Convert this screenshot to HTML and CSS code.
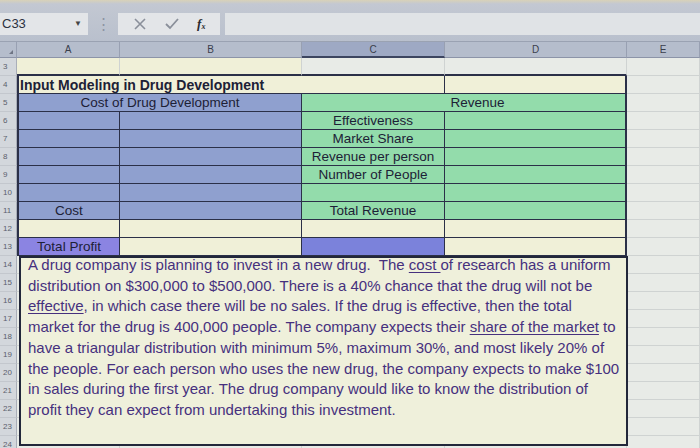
FILE: index.html
```html
<!DOCTYPE html>
<html>
<head>
<meta charset="utf-8">
<link rel="stylesheet" href="styles.css">
</head>
<body>
<div class="app">
  <div class="toolbar">
    <div class="namebox"><span>C33</span><span class="arrow">&#9660;</span></div>
    <div class="dots">&#8942;</div>
    <div class="btns">
      <svg class="ico" width="14" height="14" viewBox="0 0 14 14"><path d="M2 2 L12 12 M12 2 L2 12" stroke="#8a8f9a" stroke-width="1.6" fill="none"/></svg>
      <svg class="ico" width="16" height="14" viewBox="0 0 16 14"><path d="M2 7 L6 11 L14 2" stroke="#8a8f9a" stroke-width="1.8" fill="none"/></svg>
      <span class="fx">f<sub>x</sub></span>
    </div>
    <div class="formula"></div>
  </div>

  <div class="sheet">
    <div class="corner"><span class="tri"></span></div>
    <div class="ch">A</div><div class="ch">B</div><div class="ch sel">C</div><div class="ch">D</div><div class="ch">E</div>

    <div class="rh">3</div>
    <div class="c cream top"></div><div class="c cream top"></div><div class="c top"></div><div class="c top"></div><div class="c"></div>

    <div class="rh">4</div>
    <div class="c cream t la span3 title">Input Modeling in Drug Development</div><div class="c cream t rd"></div><div class="c"></div>

    <div class="rh">5</div>
    <div class="c blue t la span2 center">Cost of Drug Development</div><div class="c green t span2 center rd rev">Revenue</div><div class="c"></div>

    <div class="rh">6</div>
    <div class="c blue t la"></div><div class="c blue t"></div><div class="c green t center">Effectiveness</div><div class="c green t rd"></div><div class="c"></div>

    <div class="rh">7</div>
    <div class="c blue t la"></div><div class="c blue t"></div><div class="c green t center">Market Share</div><div class="c green t rd"></div><div class="c"></div>

    <div class="rh">8</div>
    <div class="c blue t la"></div><div class="c blue t"></div><div class="c green t center">Revenue per person</div><div class="c green t rd"></div><div class="c"></div>

    <div class="rh">9</div>
    <div class="c blue t la"></div><div class="c blue t"></div><div class="c green t center">Number of People</div><div class="c green t rd"></div><div class="c"></div>

    <div class="rh">10</div>
    <div class="c blue t la"></div><div class="c blue t"></div><div class="c green t"></div><div class="c green t rd"></div><div class="c"></div>

    <div class="rh">11</div>
    <div class="c blue t la center">Cost</div><div class="c blue t"></div><div class="c green t center">Total Revenue</div><div class="c green t rd"></div><div class="c"></div>

    <div class="rh">12</div>
    <div class="c cream t la"></div><div class="c cream t"></div><div class="c cream t"></div><div class="c cream t rd"></div><div class="c"></div>

    <div class="rh">13</div>
    <div class="c purple t la center">Total Profit</div><div class="c cream t"></div><div class="c purple2 t"></div><div class="c cream t rd"></div><div class="c"></div>

    <div class="rh">14</div><div class="c"></div><div class="c"></div><div class="c"></div><div class="c"></div><div class="c"></div>
    <div class="rh">15</div><div class="c"></div><div class="c"></div><div class="c"></div><div class="c"></div><div class="c"></div>
    <div class="rh">16</div><div class="c"></div><div class="c"></div><div class="c"></div><div class="c"></div><div class="c"></div>
    <div class="rh">17</div><div class="c"></div><div class="c"></div><div class="c"></div><div class="c"></div><div class="c"></div>
    <div class="rh">18</div><div class="c"></div><div class="c"></div><div class="c"></div><div class="c"></div><div class="c"></div>
    <div class="rh">19</div><div class="c"></div><div class="c"></div><div class="c"></div><div class="c"></div><div class="c"></div>
    <div class="rh">20</div><div class="c"></div><div class="c"></div><div class="c"></div><div class="c"></div><div class="c"></div>
    <div class="rh">21</div><div class="c"></div><div class="c"></div><div class="c"></div><div class="c"></div><div class="c"></div>
    <div class="rh">22</div><div class="c"></div><div class="c"></div><div class="c"></div><div class="c"></div><div class="c"></div>
    <div class="rh">23</div><div class="c"></div><div class="c"></div><div class="c"></div><div class="c"></div><div class="c"></div>
    <div class="rh">24</div><div class="c"></div><div class="c"></div><div class="c"></div><div class="c"></div><div class="c"></div>

    <div class="textbox"><div class="tbtext">A drug company is planning to invest in a new drug.&nbsp; The <u>cost </u>of research has a uniform<br>distribution on $300,000 to $500,000. There is a 40% chance that the drug will not be<br><u>effective</u>, in which case there will be no sales. If the drug is effective, then the total<br>market for the drug is 400,000 people. The company expects their <u>share of the market</u> to<br>have a triangular distribution with minimum 5%, maximum 30%, and most likely 20% of<br>the people. For each person who uses the new drug, the company expects to make $100<br>in sales during the first year. The drug company would like to know the distribution of<br>profit they can expect from undertaking this investment.</div></div>
  </div>
</div>
</body>
</html>
```

FILE: styles.css
```css
* { box-sizing: border-box; }
html, body { margin: 0; padding: 0; }
body {
  width: 700px;
  height: 448px;
  overflow: hidden;
  font-family: "Liberation Sans", Arial, sans-serif;
  background: #e8ebe7;
}
.app { width: 700px; height: 448px; position: relative; overflow: hidden; }

.toolbar {
  height: 42px;
  display: flex;
  align-items: center;
  padding-top: 6px;
  background: linear-gradient(180deg, #d8d2b8 0, #c3c8d2 4px, #b9c0cd 100%);
  border-bottom: 1px solid #9aa2b2;
}
.namebox {
  width: 88px;
  height: 22px;
  background: #e3e5e8;
  display: flex;
  align-items: center;
  justify-content: space-between;
  padding: 0 4px 0 2px;
  font-size: 13px;
  color: #2c3140;
}
.namebox .arrow { font-size: 8px; color: #444; margin-right: 2px; }
.dots {
  width: 30px;
  text-align: center;
  color: #8c93a2;
  font-size: 15px;
}
.btns {
  width: 102px;
  height: 22px;
  background: #e3e5e8;
  display: flex;
  align-items: center;
  justify-content: space-around;
  padding: 0 6px;
}
.fx {
  font-family: "Liberation Serif", serif;
  font-style: italic;
  font-weight: bold;
  font-size: 13px;
  color: #2a2a30;
}
.fx sub { font-size: 8px; vertical-align: -1px; }
.formula {
  flex: 1;
  height: 22px;
  margin-left: 5px;
  background: #e0e3e6;
}

.sheet {
  position: relative;
  display: grid;
  grid-template-columns: 17px 103px 182px 143px 182px 73px;
  grid-template-rows: 16px;
  grid-auto-rows: 18px;
}
.corner, .ch {
  background: #b5bdcc;
  border-right: 1px solid #98a0b2;
  border-bottom: 1px solid #8c94a8;
  font-size: 10px;
  color: #3a3f4c;
  display: flex;
  align-items: center;
  justify-content: center;
}
.ch.sel { background: #9ea9c4; border-bottom: 2px solid #3c4560; }
.corner { position: relative; }
.tri {
  position: absolute;
  right: 3px;
  bottom: 3px;
  width: 0; height: 0;
  border-left: 4px solid transparent;
  border-bottom: 4px solid #6e7584;
}
.rh {
  background: #d3d7dc;
  border-right: 1px solid #a9aeb8;
  border-bottom: 1px solid #c3c7cd;
  font-size: 8px;
  color: #5b606c;
  display: flex;
  align-items: center;
  padding-left: 3px;
}
.c {
  border-right: 1px solid #cfd3d2;
  border-bottom: 1px solid #cfd3d2;
  font-size: 13.5px;
  color: #1d2136;
  display: flex;
  align-items: center;
  white-space: nowrap;
  overflow: visible;
}
.cream { background: #f0f0d8; }
.blue { background: #8fa0cf; }
.green { background: #93dcab; }
.purple { background: #8b84e2; }
.purple2 { background: #7b82db; }
.t { border-right: 1px solid #2b3048; border-bottom: 1px solid #2b3048; }
.la { border-left: 2px solid #2b3048; }
.rd { border-right: 2px solid #2b3048; }
.top { border-bottom: 2px solid #2b3048; }
.span2 { grid-column: span 2; }
.span3 { grid-column: span 3; }
.center { justify-content: center; }
.title { font-weight: bold; padding-left: 1px; font-size: 14px; }
.rev { padding-left: 28px; }

.textbox {
  position: absolute;
  left: 19px;
  top: 214px;
  width: 609px;
  height: 190px;
  background: #eff0db;
  border: 2px solid #22273a;
  padding: 0 0 0 7px;
  font-size: 15px;
  line-height: 20.7px;
  color: #46307e;
}
.tbtext { margin-top: -3px; white-space: nowrap; }
.textbox u { text-decoration-thickness: 1px; text-underline-offset: 2px; }
```
